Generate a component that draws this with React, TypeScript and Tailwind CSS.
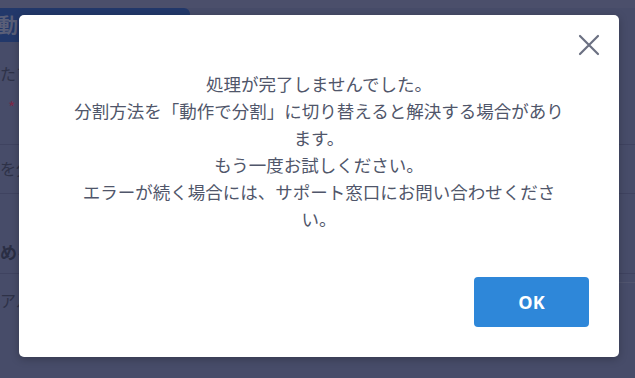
import React from "react";

export default function App() {
  const jp = { fontFamily: '"Noto Sans CJK JP", "Noto Sans", sans-serif' };
  return (
    <div className="relative w-[635px] h-[378px] overflow-hidden bg-[#474c69]" style={jp}>
      {/* background page (dimmed) */}
      <div className="flex flex-col">
        <div className="h-[8px] bg-[#4b4f6b]" />
        <div className="h-[34px] w-[190px] rounded-tr-[6px] bg-[#22386a] flex items-center">
          <span className="text-[20px] font-bold text-[#5a5f78] ml-[-2px]">動</span>
        </div>
        <div className="h-[20px] mt-[21px] text-[16px] leading-[20px] text-[#2e3248]">たプ</div>
        <div className="h-[20px] mt-[14px] text-[16px] leading-[20px] text-[#7a2a4a] pl-[8px]">*</div>
        <div className="mt-[27px] h-px bg-[#3f4360]" />
        <div className="h-[20px] mt-[13px] text-[16px] leading-[20px] text-[#2e3248]">を分</div>
        <div className="mt-[15px] h-px bg-[#3f4360]" />
        <div className="h-[22px] mt-[47px] text-[17px] font-bold leading-[22px] text-[#2a2e44]">める</div>
        <div className="mt-[10px] h-px bg-[#3f4360]" />
        <div className="h-[20px] mt-[16px] text-[16px] leading-[20px] text-[#2e3248]">アル</div>
      </div>
      <div className="absolute left-[619px] top-[282px] w-[16px] h-px bg-[#51556f]" />

      {/* modal */}
      <div className="absolute left-[19px] top-[15px] w-[600px] h-[342px] bg-white rounded-[5px] shadow-[0_2px_8px_rgba(0,0,0,0.25)] flex flex-col">
        <div className="flex justify-end pt-[19px] pr-[19px]">
          <svg width="22" height="22" viewBox="0 0 22 22" className="block">
            <path d="M2 2 L20 20 M20 2 L2 20" stroke="#6b7082" strokeWidth="2.2" strokeLinecap="round" />
          </svg>
        </div>
        <div className="mx-auto w-[500px] mt-[14px] text-center text-[17.5px] leading-[27px] text-[#50566a]">
          <p>処理が完了しませんでした。</p>
          <p>分割方法を「動作で分割」に切り替えると解決する場合があります。</p>
          <p>もう一度お試しください。</p>
          <p>エラーが続く場合には、サポート窓口にお問い合わせください。</p>
        </div>
        <div className="mt-auto flex justify-end pr-[30px] pb-[30px]">
          <button className="w-[115px] h-[50px] rounded-[4px] bg-[#2e87d9] text-white text-[18px] font-bold" style={{ fontFamily: '"Open Sans", "Liberation Sans", sans-serif' }}>
            OK
          </button>
        </div>
      </div>
    </div>
  );
}
